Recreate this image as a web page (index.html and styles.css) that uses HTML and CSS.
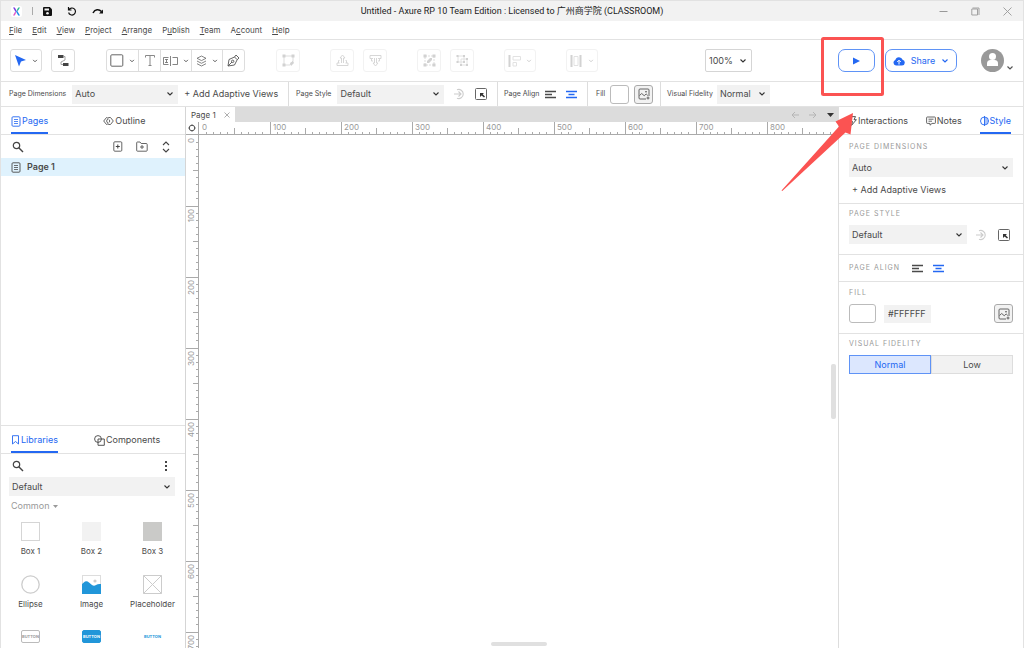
FILE: index.html
```html
<!DOCTYPE html>
<html lang="en">
<head>
<meta charset="utf-8">
<title>Untitled - Axure RP 10</title>
<link rel="stylesheet" href="styles.css">
</head>
<body>
<svg class="defs" width="0" height="0" aria-hidden="true">
  <symbol id="ticks-h" viewBox="0 0 71 12"><path d="M7.500 10v2M14.500 10v2M21.500 10v2M28.500 10v2M42.500 10v2M49.500 10v2M56.500 10v2M63.500 10v2M35.500 6v6" stroke="#aaa" fill="none"/></symbol>
  <symbol id="ticks-v" viewBox="0 0 12 71"><path d="M10 7.500h2M10 14.500h2M10 21.500h2M10 28.500h2M10 42.500h2M10 49.500h2M10 56.500h2M10 63.500h2M7 35.500h5" stroke="#aaa" fill="none"/></symbol>
  <symbol id="chev" viewBox="0 0 8 8"><path d="M1.500 2.500L4 5l2.500-2.500" fill="none" stroke="currentColor" stroke-width="1.200"/></symbol>
  <symbol id="search" viewBox="0 0 12 12"><circle cx="4.500" cy="4.500" r="3.200" fill="none" stroke="#444" stroke-width="1.200"/><path d="M7 7l4 4" stroke="#444" stroke-width="1.500"/></symbol>
  <symbol id="doc" viewBox="0 0 10 11"><rect x="1" y=".8" width="8" height="9.400" rx="1" fill="none" stroke="currentColor" stroke-width=".9"/><path d="M3 3.500h4M3 5.500h4M3 7.500h4" stroke="currentColor" stroke-width=".8"/></symbol>
  <symbol id="al-left" viewBox="0 0 11 9"><path d="M0 1.500h11M0 4.500h7M0 7.500h11" stroke="currentColor" stroke-width="1.300"/></symbol>
  <symbol id="al-mid" viewBox="0 0 11 9"><path d="M0 1.500h11M2.500 4.500h6M0 7.500h11" stroke="currentColor" stroke-width="1.300"/></symbol>
  <symbol id="apply" viewBox="0 0 12 12"><path d="M4 1.700a4.600 4.600 0 1 1 0 8.600M1 6h7M5.500 3.500L8 6 5.500 8.500" fill="none" stroke="#ccc" stroke-width="1.100"/></symbol>
  <symbol id="manage" viewBox="0 0 12 12"><rect x=".5" y=".5" width="11" height="11" rx="1" fill="none" stroke="#666"/><path d="M5 9V5h4L7.700 6.300 10 8.600l-1 1-2.400-2.200z" fill="#333"/></symbol>
  <symbol id="picture" viewBox="0 0 12 12"><path d="M8 11H2a1 1 0 0 1-1-1V2a1 1 0 0 1 1-1h8a1 1 0 0 1 1 1v6M1.500 7.500l2.200-2 2.500 2.200 2-1.700 1.600 1.500M10 8.500v3M8.500 10h3" fill="none" stroke="#555" stroke-width=".9"/><circle cx="8" cy="3.700" r=".8" fill="#444"/></symbol>
</svg>

<div class="app">
  <header class="titlebar">
    <div class="quick">
      <svg class="logo" width="11" height="11" viewBox="0 0 11 11" role="img" aria-label="Axure"><rect width="11" height="11" rx="2" fill="#fff"/><path d="M2 1.500h1.800L5.700 5 4.600 6z" fill="#7a3ce0"/><path d="M5 5.500l1-1L9 9.500H7.200z" fill="#1b8be8"/><path d="M7.300 1.500H9L6.700 5.200 5.800 4z" fill="#28b996"/><path d="M4.200 5.500l1 1.200-1.500 2.800H2z" fill="#e05bc8"/></svg>
      <i class="vline"></i>
      <button class="icon-btn save" aria-label="Save"><svg width="9" height="9" viewBox="0 0 9 9"><path d="M1 0h5.800L9 2.200V8a1 1 0 0 1-1 1H1a1 1 0 0 1-1-1V1a1 1 0 0 1 1-1z" fill="#111"/><path d="M1.500 1.500h4.500v2h-4.500z" fill="#f2f2f2"/><circle cx="4.500" cy="6.200" r="1.300" fill="#f2f2f2"/></svg></button>
      <button class="icon-btn undo" aria-label="Undo"><svg width="10" height="10" viewBox="0 0 10 10"><path d="M1.500 1v3h3M1.800 4a3.500 3.500 0 1 1-.2 2.500" fill="none" stroke="#111" stroke-width="1.200"/></svg></button>
      <button class="icon-btn" aria-label="Redo"><svg width="12" height="8" viewBox="0 0 12 8"><path d="M1 6C3 2 7 1.800 9.500 4.500" fill="none" stroke="#111" stroke-width="1.500"/><path d="M11 2.500V6.500H7z" fill="#111"/></svg></button>
    </div>
    <h1>Untitled - Axure RP 10 Team Edition : Licensed to 广州商学院 (CLASSROOM)</h1>
    <div class="window-controls">
      <button class="icon-btn" aria-label="Minimize"><svg width="9" height="9" viewBox="0 0 9 9"><path d="M.5 4.500h8" stroke="#999"/></svg></button>
      <button class="icon-btn" aria-label="Restore"><svg width="9" height="9" viewBox="0 0 9 9"><path d="M.8 2h5.700v6H.8zM1.500 1h6.500v7" fill="none" stroke="#999" stroke-width=".9"/></svg></button>
      <button class="icon-btn" aria-label="Close"><svg width="9" height="9" viewBox="0 0 9 9"><path d="M.5.5l8 8M8.500.5l-8 8" stroke="#999" stroke-width=".9"/></svg></button>
    </div>
  </header>

  <nav class="menubar">
    <a href="#"><u>F</u>ile</a><a href="#"><u>E</u>dit</a><a href="#"><u>V</u>iew</a><a href="#"><u>P</u>roject</a><a href="#"><u>A</u>rrange</a><a href="#">P<u>u</u>blish</a><a href="#"><u>T</u>eam</a><a href="#">A<u>c</u>count</a><a href="#"><u>H</u>elp</a>
  </nav>

  <div class="toolbar">
    <button class="tool wide" aria-label="Select"><svg width="13" height="13" viewBox="0 0 13 13"><path d="M1 1l11 5-5 1.500L5 12.500z" fill="#2468f2"/></svg><svg class="ch" width="6" height="6"><use href="#chev"/></svg></button>
    <button class="tool connector" aria-label="Connect"><svg width="12" height="13" viewBox="0 0 12 13"><path d="M1 1h5.500v3H1zM6 9h5.500v3H6z" fill="#444"/><path d="M6 2.500h2v3.500l-4 2v2.500h2" fill="none" stroke="#999" stroke-width=".9"/></svg></button>
    <div class="group">
      <button class="tool wide" aria-label="Shapes"><svg width="14" height="13" viewBox="0 0 14 13"><rect x=".8" y=".8" width="12" height="11.400" rx="1" fill="none" stroke="#666"/></svg><svg class="ch" width="6" height="6"><use href="#chev"/></svg></button>
      <button class="tool" aria-label="Text"><svg width="12" height="13" viewBox="0 0 12 13"><path d="M1.500 3.500V1.500h9v2M6 1.500v10M4.500 11.500h3" fill="none" stroke="#888"/></svg></button>
      <button class="tool wide" aria-label="Form"><svg width="15" height="10" viewBox="0 0 15 10"><path d="M5.500 1.500H.5v7h5M7.500 0v10M9.500 1.500h5v7h-5M2 3.500h3M3.500 3.500v3M2 6.500h3" fill="none" stroke="#666" stroke-width=".8"/></svg><svg class="ch" width="6" height="6"><use href="#chev"/></svg></button>
      <button class="tool wide" aria-label="Layers"><svg width="11" height="12" viewBox="0 0 11 12"><path d="M5.500 1l4.500 2.300-4.500 2.300L1 3.300zM1 6l4.500 2.300L10 6M1 8.700L5.500 11 10 8.700" fill="none" stroke="#666" stroke-width=".8"/></svg><svg class="ch" width="6" height="6"><use href="#chev"/></svg></button>
      <button class="tool" aria-label="Pen"><svg width="13" height="13" viewBox="0 0 13 13"><path d="M1 12l1-6.500L7.500 3l2.700 2.700L7.500 11zM7.500 3L9 1l3 3-1.800 1.700M1 12l4-4" fill="none" stroke="#555" stroke-width=".9"/><circle cx="5.700" cy="7.300" r="1.200" fill="none" stroke="#555" stroke-width=".9"/></svg></button>
    </div>
    <button class="tool dim one" disabled aria-label="Edit points"><svg width="13" height="13" viewBox="0 0 13 13"><path d="M2 2h9v5L8 11H2z" fill="none" stroke="#ddd"/><path d="M.5.5h3v3h-3zM9.500.5h3v3h-3zM.5 9.500h3v3h-3zM8 9l3-2 1 2-3 3z" fill="#d2d2d2"/></svg></button>
    <button class="tool dim two" disabled aria-label="Bring to front"><svg width="13" height="13" viewBox="0 0 13 13"><path d="M5.500 9V4H4l2.500-3L9 4H7.500v5M3.500 6.500H2.500v2.500M9.500 6.500h1v2.500M3.500 9H1v2.500h11V9H9.500" fill="none" stroke="#d2d2d2" stroke-width=".9"/></svg></button>
    <button class="tool dim three" disabled aria-label="Send to back"><svg width="13" height="13" viewBox="0 0 13 13"><path d="M5.500 4v5H4l2.500 3L9 9H7.500V4M4 4.500H1v-3h11v3H9M2.500 5v2H4M10.500 5v2H9" fill="none" stroke="#d2d2d2" stroke-width=".9"/></svg></button>
    <button class="tool dim two" disabled aria-label="Group"><svg width="13" height="13" viewBox="0 0 13 13"><path d="M2 2h9v9H2z" fill="none" stroke="#ddd" stroke-dasharray="2 1"/><path d="M.5.5h3v3h-3zM9.500.5h3v3h-3zM.5 9.500h3v3h-3zM9.500 9.500h3v3h-3zM4 7l3-3h2v2L6 9H4z" fill="#d2d2d2"/></svg></button>
    <button class="tool dim three" disabled aria-label="Ungroup"><svg width="13" height="13" viewBox="0 0 13 13"><path d="M2 2h6v6H2zM5 5h6v6H5z" fill="none" stroke="#e2e2e2"/><path d="M.5 1h2v2h-2zM7 1h2v2H7zM.5 7h2v2h-2zM10 4h2v2h-2zM4 10h2v2H4zM10 10h2v2h-2zM7 7h2v2H7z" fill="#d2d2d2"/></svg></button>
    <button class="tool wide dim two" disabled aria-label="Align"><svg width="13" height="12" viewBox="0 0 13 12"><path d="M1.500 0v12" stroke="#d2d2d2" stroke-width="2"/><path d="M5 1.500h7.500v3.500H5zM5 7.500h3.500v3.500H5z" fill="none" stroke="#e2e2e2"/></svg><svg class="ch" width="6" height="6"><use href="#chev"/></svg></button>
    <button class="tool wide dim two" disabled aria-label="Distribute"><svg width="13" height="12" viewBox="0 0 13 12"><path d="M1.500 0v12M10.500 0v12" stroke="#d2d2d2" stroke-width="2"/><path d="M4 1.500h4v9H4z" fill="none" stroke="#e2e2e2"/></svg><svg class="ch" width="6" height="6"><use href="#chev"/></svg></button>
    <div class="toolbar-right">
      <select class="zoom" aria-label="Zoom"><option>100%</option></select>
      <button class="pill play" aria-label="Preview"><svg width="7" height="8" viewBox="0 0 7 8"><path d="M0 .5L7 4 0 7.500z" fill="#2468f2"/></svg></button>
      <button class="pill share"><svg width="12" height="10" viewBox="0 0 12 10"><path d="M3 9.500a2.800 2.800 0 0 1-.7-5.400 3.800 3.800 0 0 1 7.300-.3A2.900 2.900 0 0 1 9 9.500z" fill="#2468f2"/><path d="M6 8.500v-4M4.200 6L6 4.200 7.800 6" fill="none" stroke="#fff"/></svg>Share<svg width="8" height="8"><use href="#chev"/></svg></button>
      <button class="account" aria-label="Account"><svg width="23" height="23" viewBox="0 0 23 23"><circle cx="11.500" cy="11.500" r="11.500" fill="#999"/><circle cx="11.500" cy="7.500" r="3.500" fill="#fff"/><path d="M6 17v-2.500a3.500 3.500 0 0 1 3.500-3.500h4a3.500 3.500 0 0 1 3.500 3.500V17z" fill="#fff"/></svg><svg class="low" width="8" height="8"><use href="#chev"/></svg></button>
    </div>
  </div>

  <div class="options">
    <div class="opt first"><label for="dim">Page Dimensions</label><select id="dim" class="sel w-dim"><option>Auto</option></select><button class="link">+ Add Adaptive Views</button></div>
    <div class="opt style"><label for="pst">Page Style</label><select id="pst" class="sel w-style"><option>Default</option></select><button class="icon-btn apply" aria-label="Update style"><svg width="12" height="12"><use href="#apply"/></svg></button><button class="icon-btn" aria-label="Manage styles"><svg width="12" height="12"><use href="#manage"/></svg></button></div>
    <div class="opt align"><span>Page Align</span><button class="icon-btn" aria-label="Left"><svg width="11" height="9"><use href="#al-left"/></svg></button><button class="icon-btn blue center" aria-label="Center"><svg width="11" height="9"><use href="#al-mid"/></svg></button></div>
    <div class="opt fill"><span>Fill</span><button class="swatch" aria-label="Fill colour"></button><button class="pic" aria-label="Fill image"><svg width="12" height="12"><use href="#picture"/></svg></button></div>
    <div class="opt vf"><label for="vf">Visual Fidelity</label><select id="vf" class="sel w-vf"><option>Normal</option></select></div>
  </div>

  <main class="body">
    <aside class="left">
      <section class="pages">
        <div class="tabs"><button class="tab on"><svg width="10" height="11"><use href="#doc"/></svg>Pages</button><button class="tab outline"><svg width="11" height="10" viewBox="0 0 11 10"><path d="M4.500 1.500H3.500L.7 5l2.800 3.500h1M7.500 1.500h-2L3.500 5l2 3.500h2L10.300 5zM6 3.500a2 2 0 0 1 0 3" fill="none" stroke="#555" stroke-width=".9"/></svg>Outline</button></div>
        <div class="bar">
          <button class="icon-btn grow" aria-label="Search pages"><svg width="12" height="12"><use href="#search"/></svg></button>
          <button class="icon-btn" aria-label="Add page"><svg width="10" height="11" viewBox="0 0 10 11"><rect x=".8" y=".8" width="8" height="9.400" rx="1" fill="none" stroke="#555" stroke-width=".9"/><path d="M2.800 5.500h4M4.800 3.500v4" stroke="#444"/></svg></button>
          <button class="icon-btn" aria-label="Add folder"><svg width="12" height="11" viewBox="0 0 12 11"><path d="M.7 9.300V1.700a.7.700 0 0 1 .7-.7H4l1.200 1.500h5a1 1 0 0 1 1 1v5.800a.9.900 0 0 1-.9.900H1.500a.8.800 0 0 1-.8-.9zM4 6h4M6 4v4" fill="none" stroke="#555" stroke-width=".9"/></svg></button>
          <button class="icon-btn" aria-label="Collapse"><svg width="10" height="12" viewBox="0 0 10 12"><path d="M2 4l3-3 3 3M2 8l3 3 3-3" fill="none" stroke="#444" stroke-width="1.100"/></svg></button>
        </div>
        <a class="page-row" href="#"><svg width="10" height="11"><use href="#doc"/></svg>Page 1</a>
      </section>
      <section class="libs">
        <div class="tabs"><button class="tab on"><svg width="9" height="10" viewBox="0 0 9 10"><path d="M1.500.7h6v8.300l-3-2.500-3 2.500z" fill="none" stroke="currentColor" stroke-width=".9"/></svg>Libraries</button><button class="tab comp"><svg width="11" height="11" viewBox="0 0 11 11"><circle cx="4" cy="4" r="3.400" fill="none" stroke="#444" stroke-width=".9"/><path d="M4 4h6.300v6.300H4z" fill="none" stroke="#444" stroke-width=".9"/></svg>Components</button></div>
        <div class="bar"><button class="icon-btn grow" aria-label="Search libraries"><svg width="12" height="12"><use href="#search"/></svg></button><button class="icon-btn" aria-label="More"><svg width="10" height="12" viewBox="0 0 10 12"><path d="M5 1v2M5 5v2M5 9v2" stroke="#444" stroke-width="2"/></svg></button></div>
        <select class="sel lib-sel" aria-label="Library"><option>Default</option></select>
        <button class="common">Common <svg width="5" height="3" viewBox="0 0 5 3"><path d="M0 0h5L2.500 3z" fill="#999"/></svg></button>
        <div class="widgets">
          <figure><svg width="19" height="19"><rect x=".5" y=".5" width="18" height="18" fill="#fff" stroke="#d5d5d5"/></svg><figcaption>Box 1</figcaption></figure>
          <figure><svg width="19" height="19"><rect width="19" height="19" fill="#f2f2f2"/></svg><figcaption>Box 2</figcaption></figure>
          <figure><svg width="19" height="19"><rect width="19" height="19" fill="#cacac8"/></svg><figcaption>Box 3</figcaption></figure>
          <figure><svg width="19" height="19"><circle cx="9.500" cy="9.500" r="8.700" fill="#fff" stroke="#ccc" stroke-width="1.300"/></svg><figcaption>Ellipse</figcaption></figure>
          <figure><svg width="19" height="19"><rect x=".5" y=".5" width="18" height="18" fill="#fff" stroke="#ddd"/><circle cx="13" cy="6" r="1.600" fill="#ccc"/><path d="M0 9l3-2.500q2-1 4 1l3 2.500q2 1.500 4 0t5-1v10H0z" fill="#2196d9"/></svg><figcaption>Image</figcaption></figure>
          <figure><svg width="19" height="19"><path d="M.5.5h18v18H.5zM.5.500l18 18M18.500.5l-18 18" fill="#fff" stroke="#ccc"/></svg><figcaption>Placeholder</figcaption></figure>
          <figure><span class="mini">BUTTON</span></figure>
          <figure><span class="mini primary">BUTTON</span></figure>
          <figure><span class="mini text">BUTTON</span></figure>
        </div>
      </section>
    </aside>

    <section class="center-pane">
      <div class="doc-tabs">
        <div class="doc-tab">Page 1<button class="icon-btn" aria-label="Close tab"><svg width="6" height="6" viewBox="0 0 6 6"><path d="M.5.500l5 5M5.500.5l-5 5" stroke="#999" stroke-width=".8"/></svg></button></div>
        <div class="doc-nav">
          <button class="icon-btn" aria-label="Back"><svg width="8" height="8" viewBox="0 0 8 8"><path d="M8 4H1M4 1L1 4l3 3" fill="none" stroke="#b5b5b5"/></svg></button>
          <button class="icon-btn" aria-label="Forward"><svg width="8" height="8" viewBox="0 0 8 8"><path d="M0 4h7M4 1l3 3-3 3" fill="none" stroke="#b5b5b5"/></svg></button>
          <button class="icon-btn" aria-label="Open tabs"><svg width="7" height="8" viewBox="0 0 7 8"><path d="M0 2h7L3.500 6z" fill="#333"/></svg></button>
        </div>
      </div>
      <div class="ruler-grid">
        <button class="corner" aria-label="Origin"><svg width="8" height="8" viewBox="0 0 8 8"><circle cx="4" cy="4" r="2.800" fill="none" stroke="#444" stroke-width=".9"/><path d="M4 .500v1.500M4 6v1.500M.5 4h1.500M6 4h1.500" stroke="#444"/></svg></button>
        <div class="ruler-h">
          <span>0<svg><use href="#ticks-h"/></svg></span><span>100<svg><use href="#ticks-h"/></svg></span><span>200<svg><use href="#ticks-h"/></svg></span><span>300<svg><use href="#ticks-h"/></svg></span><span>400<svg><use href="#ticks-h"/></svg></span><span>500<svg><use href="#ticks-h"/></svg></span><span>600<svg><use href="#ticks-h"/></svg></span><span>700<svg><use href="#ticks-h"/></svg></span><span>800<svg><use href="#ticks-h"/></svg></span>
        </div>
        <div class="ruler-v">
          <span><b>0</b><svg><use href="#ticks-v"/></svg></span><span><b>100</b><svg><use href="#ticks-v"/></svg></span><span><b>200</b><svg><use href="#ticks-v"/></svg></span><span><b>300</b><svg><use href="#ticks-v"/></svg></span><span><b>400</b><svg><use href="#ticks-v"/></svg></span><span><b>500</b><svg><use href="#ticks-v"/></svg></span><span><b>600</b><svg><use href="#ticks-v"/></svg></span><span><b>700</b><svg><use href="#ticks-v"/></svg></span>
        </div>
        <div class="canvas"><i class="thumb-v"></i><i class="thumb-h"></i></div>
      </div>
    </section>

    <aside class="right">
      <div class="tabs"><button class="tab"><svg width="8" height="10" viewBox="0 0 8 10"><path d="M3 .6h3.500L5 3.700h2.400L2.500 9.400l1-4H1z" fill="none" stroke="#444" stroke-width=".9"/></svg>Interactions</button><button class="tab"><svg width="10" height="10" viewBox="0 0 10 10"><path d="M1.300 1h7.400a.7.700 0 0 1 .7.700v5a.7.700 0 0 1-.7.700H6L4 9.200V7.400H1.300a.7.700 0 0 1-.7-.7v-5a.7.700 0 0 1 .7-.7zM2.500 3.200h5M2.500 5.200h3.500" fill="none" stroke="#555" stroke-width=".9"/></svg>Notes</button><button class="tab on"><svg width="9" height="10" viewBox="0 0 9 10"><path d="M4.500 1a4 4 0 0 0 0 8M4.500 0v10M4.500 1a4 4 0 0 1 0 8" fill="none" stroke="currentColor" stroke-width=".9"/><path d="M4.500 3h3M4.500 5h4M4.500 7h3" stroke="currentColor" stroke-width=".8"/></svg>Style</button></div>
      <section class="sec s-dim"><h2>PAGE DIMENSIONS</h2><select class="sel" aria-label="Page dimensions"><option>Auto</option></select><button class="link">+ Add Adaptive Views</button></section>
      <section class="sec s-style"><h2>PAGE STYLE</h2><div class="row"><select class="sel grow" aria-label="Page style"><option>Default</option></select><button class="icon-btn" aria-label="Update style"><svg width="12" height="12"><use href="#apply"/></svg></button><button class="icon-btn" aria-label="Manage styles"><svg width="12" height="12"><use href="#manage"/></svg></button></div></section>
      <section class="sec s-align"><h2>PAGE ALIGN</h2><button class="icon-btn" aria-label="Left"><svg width="11" height="9"><use href="#al-left"/></svg></button><button class="icon-btn blue" aria-label="Center"><svg width="11" height="9"><use href="#al-mid"/></svg></button></section>
      <section class="sec s-fill"><h2>FILL</h2><div class="row"><button class="swatch big" aria-label="Fill colour"></button><input class="hex" aria-label="Hex colour" value="#FFFFFF"><button class="pic" aria-label="Fill image"><svg width="12" height="12"><use href="#picture"/></svg></button></div></section>
      <section class="sec s-vf"><h2>VISUAL FIDELITY</h2><div class="segment"><button class="on">Normal</button><button>Low</button></div></section>
    </aside>
  </main>
  <svg class="callout" width="112" height="164" viewBox="0 0 112 164" aria-hidden="true"><rect x="46.500" y="6.500" width="60" height="56" rx="1" fill="none" stroke="#fb5352" stroke-width="3"/><path d="M77 81L59.500 89.500l3.500 5L5.500 158.500l.8.500L69.500 100.500l5 2z" fill="#fb5352"/></svg>
</div>
</body>
</html>
```
FILE: styles.css
```css
* { box-sizing: border-box; }
body { margin: 0; font: 9px/12px Inter, "Noto Sans CJK SC", sans-serif; color: #4a4a4a; background: #fff; }
button, select, input { font: inherit; color: inherit; margin: 0; padding: 0; border: 0; background: none; border-radius: 0; }
svg { display: block; flex: none; }
h1, h2, figure { margin: 0; font-weight: 400; }
a { color: inherit; text-decoration: none; }
.defs { position: absolute; }
.app { position: relative; display: flex; flex-direction: column; height: 100vh; overflow: hidden; border: solid #e2e2e2; border-width: 1px 1px 0; }
.icon-btn { display: flex; align-items: center; justify-content: center; flex: none; }
.blue { color: #2468f2; }
.grow { flex: 1; justify-content: flex-start; }

.titlebar { display: grid; grid-template-columns: 1fr auto 1fr; align-items: center; height: 20px; background: #f2f2f2; flex: none; }
.titlebar h1 { font-family: Roboto, "Noto Sans CJK SC", sans-serif; font-size: 9px; color: #222; white-space: nowrap; }
.quick { display: flex; align-items: center; padding-left: 10px; }
.vline { width: 1px; height: 8px; margin: 0 10px; background: #aaa; }
.save { margin-right: 15px; }
.undo { margin-right: 15px; }
.window-controls { display: flex; justify-content: flex-end; gap: 23px; padding-right: 11px; }

.menubar { display: flex; gap: 10px; align-items: center; height: 19px; padding-left: 8px; border-bottom: 1px solid #e2e2e2; flex: none; font-size: 8px; }
.menubar u { text-underline-offset: 1px; }

.toolbar { display: flex; align-items: center; height: 42px; padding-left: 9px; border-bottom: 1px solid #e2e2e2; flex: none; }
.tool { display: flex; align-items: center; justify-content: center; gap: 5px; width: 24px; height: 23px; flex: none; border: 1px solid #ddd; border-radius: 3px; }
.tool.wide { width: 32px; }
.connector { margin-left: 9px; }
.group { display: flex; margin-left: 31px; border: 1px solid #ddd; border-radius: 3px; }
.group .tool { height: 21px; width: 22px; border-width: 0 0 0 1px; border-radius: 0; }
.group .tool.wide { width: 31px; }
.group .tool:first-child { border-left: 0; }
.dim { border-color: #f2f2f2; color: #ccc; }
.one { margin-left: 31px; }
.two { margin-left: 30px; }
.three { margin-left: 9px; }
.toolbar-right { display: flex; align-items: center; margin-left: auto; padding-right: 9px; }
select { appearance: none; background: #f2f2f2 url("data:image/svg+xml,%3Csvg xmlns='http://www.w3.org/2000/svg' width='8' height='8'%3E%3Cpath d='M1.5 2.500L4 5l2.500-2.500' fill='none' stroke='%23333' stroke-width='1.100'/%3E%3C/svg%3E") no-repeat right 4px center; }
.zoom { width: 47px; height: 23px; padding-left: 3px; margin-right: 86px; background-color: #fff; border: 1px solid #d5d5d5; border-radius: 2px; }
.pill { display: flex; align-items: center; justify-content: center; height: 23px; border: 1px solid #5f93f6; border-radius: 7px; color: #2468f2; background: #fff; }
.play { width: 37px; margin-right: 10px; }
.share { width: 72px; gap: 6px; margin-right: 24px; }
.account { display: flex; gap: 2px; align-items: flex-end; }
.low { color: #555; }

.options { display: flex; height: 25px; border-bottom: 1px solid #e2e2e2; flex: none; }
.opt { display: flex; align-items: center; font-size: 7px; border-right: 1px solid #ddd; white-space: nowrap; }
.opt:last-child { border-right: 0; }
.sel { height: 19px; padding-left: 3px; font-size: 9px; }
.link { font-size: 9px; white-space: nowrap; }
.first { width: 288px; padding-left: 8px; gap: 6px; flex: none; }
.w-dim { width: 106px; }
.style { width: 209px; padding-left: 7px; gap: 6px; flex: none; }
.w-style { width: 107px; }
.apply { margin: 0 4px 0 3px; }
.align { width: 90px; padding-left: 6px; gap: 6px; flex: none; }
.center { margin-left: 4px; }
.fill { width: 73px; padding-left: 8px; gap: 5px; flex: none; }
.vf { padding-left: 6px; gap: 4px; }
.w-vf { width: 53px; }
.swatch { width: 19px; height: 19px; border: 1px solid #bbb; border-radius: 3px; background: #fff; }
.pic { display: flex; align-items: center; justify-content: center; width: 19px; height: 19px; border: 1px solid #aaa; border-radius: 3px; background: #f2f2f2; }

.body { display: grid; grid-template-columns: 184px minmax(0, 1fr) 185px; flex: 1; min-height: 0; }
.left { display: flex; flex-direction: column; min-height: 0; }
.pages { flex: 1; min-height: 0; }
.tabs { display: flex; height: 28px; border-bottom: 1px solid #e2e2e2; padding-left: 10px; }
.tab { display: flex; align-items: center; gap: 1px; height: 27px; padding-top: 3px; border-bottom: 2px solid transparent; }
.tab.on { color: #2468f2; border-color: #2468f2; }
.outline { margin-left: 55px; }
.comp { margin-left: 36px; }
.bar { display: flex; align-items: center; gap: 13px; height: 23px; padding: 0 14px 0 11px; }
.page-row { display: flex; align-items: center; gap: 6px; height: 18px; padding-left: 10px; background: #dff2fd; font-weight: 600; }
.libs { height: 223px; overflow: hidden; border-top: 1px solid #e2e2e2; flex: none; }
.lib-sel { display: block; width: calc(100% - 18px); margin-left: 8px; }
.common { display: flex; align-items: center; gap: 4px; height: 20px; padding-left: 10px; color: #999; }
.widgets { display: grid; grid-template-columns: repeat(3, 61px); grid-auto-rows: 53px; padding-top: 6px; margin-left: -1px; }
.widgets figure { display: flex; flex-direction: column; align-items: center; gap: 4px; }
.widgets figcaption { font-size: 8px; }
.mini { width: 19px; height: 13px; margin-top: 2px; border: 1px solid #bbb; border-radius: 2px; font-size: 4px; line-height: 11px; font-weight: 700; text-align: center; color: #999; }
.mini.primary { background: #2196d9; border-color: #2196d9; color: #fff; }
.mini.text { border-color: transparent; color: #2196d9; }

.center-pane { display: flex; flex-direction: column; min-height: 0; border-left: 1px solid #d5d5d5; }
.doc-tabs { display: flex; justify-content: space-between; height: 15px; background: #dcdcdc; flex: none; }
.doc-tab { display: flex; align-items: center; gap: 8px; padding: 0 5px; background: #fff; font-size: 8px; }
.doc-nav { display: flex; align-items: center; gap: 10px; padding-right: 4px; }
.ruler-grid { display: grid; grid-template-columns: 13px minmax(0, 1fr); grid-template-rows: 13px minmax(0, 1fr); flex: 1; min-height: 0; }
.corner { display: flex; align-items: center; justify-content: center; border: solid #aaa; border-width: 0 1px 1px 0; }
.ruler-h { display: flex; overflow: hidden; border-bottom: 1px solid #aaa; font-size: 8px; line-height: 11px; color: #999; }
.ruler-h span { display: grid; flex: none; width: 71px; padding-left: 2px; border-left: 1px solid #aaa; }
.ruler-h span:first-child { border-color: transparent; }
.ruler-h svg { width: 71px; height: 12px; margin-left: -3px; margin-top: -11px; }
.ruler-v { overflow: hidden; border-right: 1px solid #aaa; font-size: 8px; color: #999; }
.ruler-v span { display: grid; height: 71px; border-top: 1px solid #aaa; }
.ruler-v span:first-child { border-color: transparent; }
.ruler-v b { grid-area: 1 / 1; font-weight: 400; line-height: 10px; writing-mode: vertical-rl; transform: rotate(180deg); justify-self: start; align-self: start; padding-bottom: 2px; }
.ruler-v svg { grid-area: 1 / 1; width: 12px; height: 71px; margin-top: -1px; }
.canvas { position: relative; background: #fff; }
.thumb-v { position: absolute; right: 2px; top: 50%; width: 5px; height: 55px; margin-top: -28px; border-radius: 2px; background: #e0e0e0; }
.thumb-h { position: absolute; left: 50%; bottom: 2px; width: 56px; height: 4px; margin-left: -28px; border-radius: 2px; background: #e0e0e0; }

.right { border-left: 1px solid #ddd; }
.right .tabs { justify-content: space-between; padding: 0 12px 0 10px; }
.sec { display: flex; flex-direction: column; gap: 5px; padding: 4px 10px 10px; border-bottom: 1px solid #e2e2e2; }
.sec h2 { font-size: 7px; line-height: 12px; letter-spacing: 1px; color: #999; white-space: nowrap; }
.s-dim { padding-top: 6px; padding-bottom: 7px; }
.s-dim .link { align-self: flex-start; margin-left: 3px; margin-top: 2px; }
.row { display: flex; align-items: center; gap: 8px; }
.row .sel { min-width: 0; }
.row .icon-btn:last-child { margin: 0 3px; }
.s-align { flex-direction: row; align-items: center; gap: 10px; height: 27px; padding-top: 0; padding-bottom: 0; }
.s-align h2 { margin-right: 2px; }
.s-fill { padding-top: 5px; }
.swatch.big { width: 27px; }
.hex { width: 47px; height: 18px; padding-left: 4px; background: #f2f2f2; }
.row .pic { margin-left: auto; }
.s-vf { border-bottom: 0; }
.segment { display: grid; grid-template-columns: 1fr 1fr; height: 19px; }
.segment button { border: 1px solid #ddd; background: #f2f2f2; }
.segment .on { color: #2468f2; background: #dce7fe; border-color: #5f93f6; }
.callout { position: absolute; right: 135px; top: 31px; pointer-events: none; }
```
